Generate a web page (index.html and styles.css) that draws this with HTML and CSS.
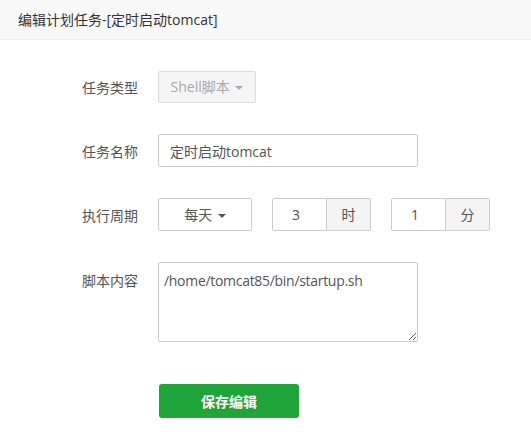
FILE: index.html
```html
<!DOCTYPE html>
<html lang="zh-CN">
<head>
  <meta charset="UTF-8" />
  <meta name="viewport" content="width=device-width, initial-scale=1.0" />
  <title>编辑计划任务</title>
  <link rel="stylesheet" href="styles.css">
</head>
<body>
  <div class="layer">
    <div class="layer-title">编辑计划任务-[定时启动tomcat]</div>
    <div class="form">
      <div class="row">
        <span class="label">任务类型</span>
        <div class="select disabled">Shell脚本 <span class="caret"></span></div>
      </div>
      <div class="row">
        <span class="label">任务名称</span>
        <input class="input name" type="text" value="定时启动tomcat">
      </div>
      <div class="row">
        <span class="label">执行周期</span>
        <div class="select cycle">每天 <span class="caret"></span></div>
        <div class="group">
          <input class="input num" type="text" value="3">
          <span class="addon">时</span>
        </div>
        <div class="group">
          <input class="input num" type="text" value="1">
          <span class="addon">分</span>
        </div>
      </div>
      <div class="row top">
        <span class="label">脚本内容</span>
        <textarea class="script">/home/tomcat85/bin/startup.sh</textarea>
      </div>
      <div class="row btn-row">
        <button class="btn">保存编辑</button>
      </div>
    </div>
  </div>
</body>
</html>
```

FILE: styles.css
```css
* {
  box-sizing: border-box;
  font-family: "Open Sans", "Noto Sans CJK SC", sans-serif;
}
body {
  margin: 0;
  background: #fff;
  color: #555;
  font-size: 14px;
}
.layer-title {
  height: 40px;
  line-height: 39px;
  padding-left: 18px;
  background: #f8f8f8;
  border-bottom: 1px solid #eee;
  color: #333;
  font-size: 14px;
}
.form {
  padding-top: 31px;
}
.row {
  display: flex;
  align-items: center;
  margin-bottom: 31px;
}
.row.top {
  align-items: flex-start;
  margin-bottom: 42px;
}
.label {
  width: 158px;
  padding-right: 20px;
  text-align: right;
  color: #555;
}
.row.top .label {
  padding-top: 8px;
}
.btn-row {
  padding-left: 159px;
}
.select {
  height: 33px;
  line-height: 31px;
  border: 1px solid #ccc;
  border-radius: 2px;
  text-align: center;
  color: #555;
}
.select.disabled {
  width: 98px;
  height: 32px;
  line-height: 30px;
  background: #f5f5f5;
  border-color: #ddd;
  color: #aaa;
}
.select.cycle {
  width: 94px;
  margin-right: 20px;
}
.caret {
  display: inline-block;
  width: 0;
  height: 0;
  margin-left: 2px;
  vertical-align: middle;
  border-top: 4px solid #555;
  border-left: 4px solid transparent;
  border-right: 4px solid transparent;
}
.disabled .caret {
  border-top-color: #aaa;
}
.input {
  height: 33px;
  border: 1px solid #ccc;
  border-radius: 2px;
  padding: 0 11px;
  font-size: 14px;
  color: #555;
  outline: none;
}
.input.name {
  width: 260px;
}
.group {
  display: flex;
  margin-right: 20px;
}
.input.num {
  width: 55px;
  padding-left: 19px;
  border-radius: 2px 0 0 2px;
}
.addon {
  width: 44px;
  height: 33px;
  line-height: 31px;
  text-align: center;
  background: #f4f4f4;
  border: 1px solid #ccc;
  border-left: none;
  border-radius: 0 2px 2px 0;
  color: #555;
}
.script {
  width: 260px;
  height: 80px;
  padding: 8px 5px;
  border: 1px solid #ccc;
  border-radius: 2px;
  font-size: 14px;
  line-height: 20px;
  letter-spacing: -0.3px;
  color: #555;
  resize: vertical;
  outline: none;
}
.btn {
  width: 140px;
  height: 34px;
  border: none;
  border-radius: 3px;
  background: #20a53a;
  color: #fff;
  font-size: 14px;
  font-weight: 600;
  cursor: pointer;
}
```
